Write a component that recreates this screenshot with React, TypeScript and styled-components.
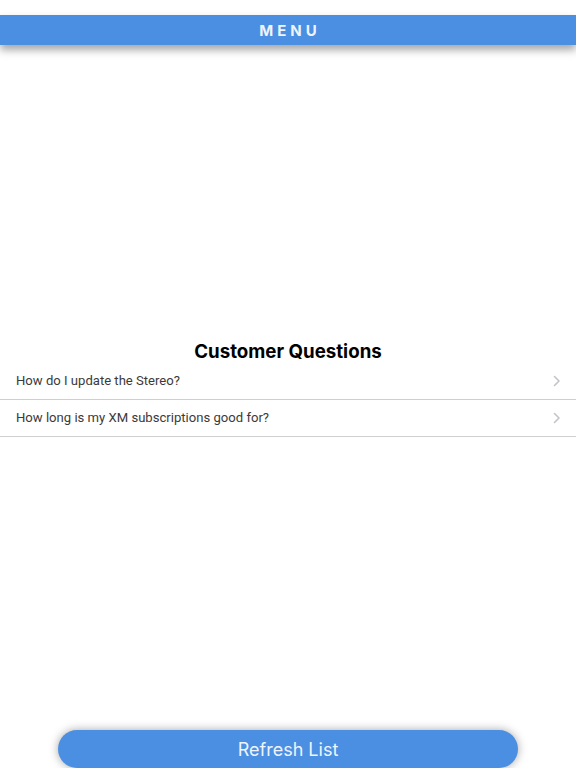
import styled, { createGlobalStyle } from 'styled-components';

const questions = [
  'How do I update the Stereo?',
  'How long is my XM subscriptions good for?',
];

export default function App() {
  return (
    <>
      <GlobalStyle />
      <StyledPage>
        <StyledMenuBar>MENU</StyledMenuBar>
        <StyledContent>
          <StyledTitle>Customer Questions</StyledTitle>
          <StyledList>
            {questions.map((q) => (
              <StyledRow key={q}>
                <span>{q}</span>
                <Chevron />
              </StyledRow>
            ))}
          </StyledList>
        </StyledContent>
        <StyledFooter>
          <StyledRefreshButton>Refresh List</StyledRefreshButton>
        </StyledFooter>
      </StyledPage>
    </>
  );
}

function Chevron() {
  return (
    <svg width="8" height="12" viewBox="0 0 8 12" fill="none">
      <path
        d="M1.5 1.5L6 6L1.5 10.5"
        stroke="#c4c4c8"
        strokeWidth="1.6"
        strokeLinecap="round"
        strokeLinejoin="round"
      />
    </svg>
  );
}

const GlobalStyle = createGlobalStyle`
  html, body {
    margin: 0;
    padding: 0;
    background: #ffffff;
    font-family: Inter, "Noto Sans", "Liberation Sans", sans-serif;
  }
`;

const StyledPage = styled.div`
  display: flex;
  flex-direction: column;
  height: 100vh;
  overflow: hidden;
`;

const StyledMenuBar = styled.div`
  margin-top: 15px;
  height: 30px;
  display: flex;
  align-items: center;
  justify-content: center;
  background: #4a8fe2;
  color: #eef4fc;
  font-size: 15px;
  font-weight: 700;
  letter-spacing: 4px;
  padding-left: 4px;
  box-shadow: 0 5px 8px rgba(0, 0, 0, 0.35);
`;

const StyledContent = styled.div`
  flex: 1;
  display: flex;
  flex-direction: column;
  justify-content: center;
  padding-top: 2px;
`;

const StyledTitle = styled.div`
  text-align: center;
  font-size: 18.7px;
  font-weight: 700;
  color: #000;
  line-height: 22px;
`;

const StyledList = styled.div`
  display: flex;
  flex-direction: column;
`;

const StyledRow = styled.div`
  height: 36px;
  display: flex;
  align-items: center;
  justify-content: space-between;
  padding: 0 15px 0 16px;
  border-bottom: 1px solid #cfcfd2;
  font-family: Roboto, "Liberation Sans", sans-serif;
  font-size: 13.1px;
  color: #3a3a3a;
`;

const StyledFooter = styled.div`
  display: flex;
  justify-content: center;
`;

const StyledRefreshButton = styled.button`
  width: 460px;
  height: 38px;
  border: none;
  border-radius: 19px;
  background: #4a8fe2;
  color: #eef4fc;
  font-family: Inter, "Noto Sans", "Liberation Sans", sans-serif;
  font-size: 18px;
  font-weight: 400;
  box-shadow: 0 0 10px rgba(0, 0, 0, 0.35);
`;
